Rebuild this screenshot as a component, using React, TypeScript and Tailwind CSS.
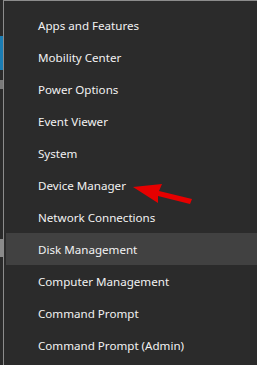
const items = [
  "Apps and Features",
  "Mobility Center",
  "Power Options",
  "Event Viewer",
  "System",
  "Device Manager",
  "Network Connections",
  "Disk Management",
  "Computer Management",
  "Command Prompt",
  "Command Prompt (Admin)",
];

export default function App() {
  return (
    <div className="relative flex h-[365px] w-[257px] overflow-hidden bg-[#2b2b2b]" style={{ fontFamily: '"Noto Sans", "Open Sans", sans-serif' }}>
      {/* desktop peeking out on the left */}
      <div className="flex w-[3px] flex-col bg-[#2a2a2a]">
        <div className="h-[36px]" />
        <div className="h-[34px] bg-[#1a7db4]" />
        <div className="h-[10px]" />
        <div className="h-[9px] bg-[#7a7a7a]" />
        <div className="h-[150px]" />
        <div className="h-[18px] bg-[#8a8a8a]" />
      </div>
      <div className="flex-1 border-l border-t border-[#8c8c8c] pt-[8px]">
        {items.map((label) => (
          <div
            key={label}
            className={
              "ml-[2px] flex h-[32px] items-center pb-[1px] pl-[32px] pt-[3px] text-[11.6px] text-[#f2f2f2] " +
              (label === "Disk Management" ? "bg-[#414141]" : "")
            }
          >
            {label}
          </div>
        ))}
      </div>
      <svg className="absolute left-0 top-0" width="257" height="365" viewBox="0 0 257 365">
        <polygon points="133,187 162,184 159,191 192,199 190,204 158,196 158,203" fill="#e60000" />
      </svg>
    </div>
  );
}
